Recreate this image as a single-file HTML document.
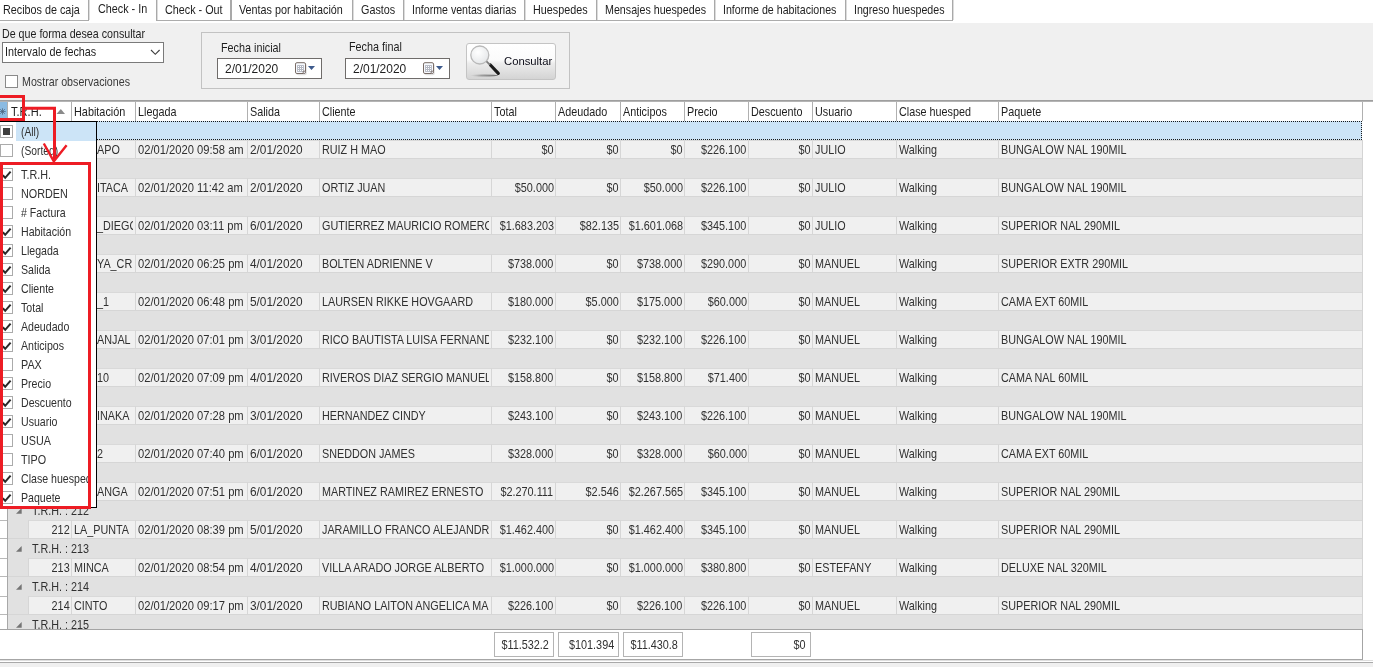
<!DOCTYPE html>
<html><head><meta charset="utf-8"><title>Check - In</title>
<style>
html,body{margin:0;padding:0}
body{width:1373px;height:667px;position:relative;overflow:hidden;background:#f0f0f0;font-family:"Liberation Sans",sans-serif;font-size:13px;color:#1e1e1e;line-height:15px}
.a{position:absolute}
.x{position:absolute;white-space:nowrap;display:inline-block;transform-origin:0 50%;transform:scaleX(.83);height:15px;line-height:15px}
.x.r{transform-origin:100% 50%}
.x.n{transform:scaleX(.86)}
.x.m{transform:scaleX(.835)}
.x.d{transform:scaleX(.91)}
.tab{position:absolute;top:0;height:20px;background:#fff;border-right:1px solid #a6a6a6;border-bottom:1px solid #a6a6a6;box-sizing:border-box}
.cb{position:absolute;width:13px;height:13px;box-sizing:border-box;border:1px solid #ababab;background:#fff}
.cell{position:absolute;background:#f0f0f0;box-sizing:border-box;border-left:1px solid #d6d6d6;border-top:1px solid #d9d9d9;border-bottom:1px solid #d6d6d6;height:19px}
.g{color:#303030}
</style></head><body><div id="root" style="position:absolute;left:0;top:0;width:1373px;height:667px;will-change:transform">

<div class="a" style="left:0;top:0;width:1373px;height:23px;background:#fff"></div>
<div class="a" style="left:0;top:20px;width:953px;height:1px;background:#acacac"></div>
<div class="a" style="left:89px;top:20px;width:67px;height:1px;background:#fff"></div>
<div class="a" style="left:88px;top:0;width:1px;height:21px;background:#a9a9a9"></div>
<div class="a" style="left:89px;top:0;width:1px;height:20px;background:#dcdcdc"></div>
<div class="a" style="left:156px;top:0;width:1px;height:21px;background:#a9a9a9"></div>
<div class="a" style="left:157px;top:0;width:1px;height:20px;background:#dcdcdc"></div>
<div class="a" style="left:230px;top:0;width:2px;height:21px;background:#a9a9a9"></div>
<div class="a" style="left:352px;top:0;width:1px;height:21px;background:#a9a9a9"></div>
<div class="a" style="left:353px;top:0;width:1px;height:20px;background:#dcdcdc"></div>
<div class="a" style="left:403px;top:0;width:1px;height:21px;background:#a9a9a9"></div>
<div class="a" style="left:404px;top:0;width:1px;height:20px;background:#dcdcdc"></div>
<div class="a" style="left:524px;top:0;width:1px;height:21px;background:#a9a9a9"></div>
<div class="a" style="left:525px;top:0;width:1px;height:20px;background:#dcdcdc"></div>
<div class="a" style="left:596px;top:0;width:1px;height:21px;background:#a9a9a9"></div>
<div class="a" style="left:597px;top:0;width:1px;height:20px;background:#dcdcdc"></div>
<div class="a" style="left:714px;top:0;width:1px;height:21px;background:#a9a9a9"></div>
<div class="a" style="left:715px;top:0;width:1px;height:20px;background:#dcdcdc"></div>
<div class="a" style="left:845px;top:0;width:1px;height:21px;background:#a9a9a9"></div>
<div class="a" style="left:846px;top:0;width:1px;height:20px;background:#dcdcdc"></div>
<div class="a" style="left:952px;top:0;width:1px;height:21px;background:#a9a9a9"></div>
<div class="a" style="left:953px;top:0;width:1px;height:20px;background:#dcdcdc"></div>
<span class="x t" style="left:3.3px;top:2px;">Recibos de caja</span>
<span class="x t" style="left:98px;top:1px;">Check - In</span>
<span class="x t" style="left:165px;top:2px;">Check - Out</span>
<span class="x t" style="left:239.1px;top:2px;">Ventas por habitación</span>
<span class="x t" style="left:360.6px;top:2px;">Gastos</span>
<span class="x t" style="left:411.6px;top:2px;;transform:scaleX(0.816)">Informe ventas diarias</span>
<span class="x t" style="left:532.5px;top:2px;">Huespedes</span>
<span class="x t" style="left:604.8px;top:2px;;transform:scaleX(0.822)">Mensajes huespedes</span>
<span class="x t" style="left:722.6px;top:2px;;transform:scaleX(0.817)">Informe de habitaciones</span>
<span class="x t" style="left:854px;top:2px;;transform:scaleX(0.818)">Ingreso huespedes</span>
<span class="x t" style="left:1.8px;top:26px;;transform:scaleX(0.821)">De que forma desea consultar</span>
<div class="a" style="left:2px;top:42px;width:162px;height:21px;box-sizing:border-box;border:1px solid #7a7a7a;background:#fff"></div>
<span class="x t" style="left:4.5px;top:44px;">Intervalo de fechas</span>
<svg class="a" style="left:150px;top:49px" width="11" height="8" viewBox="0 0 11 8"><path d="M1 1 L5.3 5.3 L9.6 1" fill="none" stroke="#404040" stroke-width="1.15"/></svg>
<div class="cb" style="left:5px;top:75px;border-color:#8a8a8a"></div>
<span class="x t" style="left:21.6px;top:74px;color:#3a3a3a;transform:scaleX(0.8215)">Mostrar observaciones</span>
<div class="a" style="left:201px;top:32px;width:369px;height:57px;box-sizing:border-box;border:1px solid #c2c2c2"></div>
<span class="x t" style="left:220.5px;top:40px;">Fecha inicial</span>
<span class="x t" style="left:348.7px;top:39px;">Fecha final</span>
<div class="a" style="left:217px;top:58px;width:105px;height:21px;box-sizing:border-box;border:1px solid #6f6c6a;background:#fff"></div>
<span class="x n" style="left:224.6px;top:61px;transform:scaleX(.92)">2/01/2020</span>
<svg class="a" style="left:294px;top:61px" width="24" height="15" viewBox="0 0 24 15"><rect x="2.2" y="2.6" width="10.6" height="11.6" rx="2" fill="#9a9a9a" opacity=".28"/><rect x="1.5" y="1.7" width="10" height="10.8" rx="1.4" fill="#f7f9fd" stroke="#776a64" stroke-width="1"/><rect x="3.1" y="4.1" width="6.8" height="6.8" fill="#b3b7c2"/><g fill="#fff"><rect x="4" y="5" width="1" height="1"/><rect x="6" y="5" width="1" height="1"/><rect x="8" y="5" width="1" height="1"/><rect x="4" y="7" width="1" height="1"/><rect x="6" y="7" width="1" height="1"/><rect x="8" y="7" width="1" height="1"/><rect x="4" y="9" width="1" height="1"/><rect x="6" y="9" width="1" height="1"/><rect x="8" y="9" width="1" height="1"/></g><path d="M9.2 12.9 L9.2 10.2 L12 10.2" fill="#e8ecf6" stroke="#776a64" stroke-width=".9"/><path d="M14 4.9h7l-3.5 4.1z" fill="#3d5a8c"/></svg>
<div class="a" style="left:345px;top:58px;width:105px;height:21px;box-sizing:border-box;border:1px solid #6f6c6a;background:#fff"></div>
<span class="x n" style="left:352.6px;top:61px;transform:scaleX(.92)">2/01/2020</span>
<svg class="a" style="left:422px;top:61px" width="24" height="15" viewBox="0 0 24 15"><rect x="2.2" y="2.6" width="10.6" height="11.6" rx="2" fill="#9a9a9a" opacity=".28"/><rect x="1.5" y="1.7" width="10" height="10.8" rx="1.4" fill="#f7f9fd" stroke="#776a64" stroke-width="1"/><rect x="3.1" y="4.1" width="6.8" height="6.8" fill="#b3b7c2"/><g fill="#fff"><rect x="4" y="5" width="1" height="1"/><rect x="6" y="5" width="1" height="1"/><rect x="8" y="5" width="1" height="1"/><rect x="4" y="7" width="1" height="1"/><rect x="6" y="7" width="1" height="1"/><rect x="8" y="7" width="1" height="1"/><rect x="4" y="9" width="1" height="1"/><rect x="6" y="9" width="1" height="1"/><rect x="8" y="9" width="1" height="1"/></g><path d="M9.2 12.9 L9.2 10.2 L12 10.2" fill="#e8ecf6" stroke="#776a64" stroke-width=".9"/><path d="M14 4.9h7l-3.5 4.1z" fill="#3d5a8c"/></svg>
<div class="a" style="left:466px;top:43px;width:90px;height:37px;box-sizing:border-box;border:1px solid #c4c4c4;border-radius:3px;background:linear-gradient(#ffffff 0%,#fbfbfb 45%,#ececec 55%,#d4d4d4 100%)"></div>
<svg class="a" style="left:467px;top:44px" width="40" height="35" viewBox="0 0 40 35"><defs><radialGradient id="lg" cx="40%" cy="35%" r="70%"><stop offset="0" stop-color="#ffffff"/><stop offset="1" stop-color="#e4e6e8"/></radialGradient><linearGradient id="sh" x1="0" x2="1"><stop offset="0" stop-color="#999" stop-opacity="0"/><stop offset=".4" stop-color="#777" stop-opacity=".8"/><stop offset="1" stop-color="#444"/></linearGradient></defs><ellipse cx="17" cy="31.5" rx="14" ry="0.9" fill="url(#sh)" opacity=".75"/><circle cx="12.8" cy="11" r="9" fill="url(#lg)" stroke="#b9b9b9" stroke-width="1.3"/><path d="M23.4 21 L31.3 29.3" stroke="#1a1a1a" stroke-width="3.2" stroke-linecap="round"/><path d="M19.5 17.3 L23 20.8" stroke="#7c7c7c" stroke-width="1.8"/></svg>
<span class="a" style="left:503.5px;top:53.5px;font-size:11.5px;line-height:14px;color:#0c0c18;white-space:nowrap;transform:scaleX(.98);transform-origin:0 50%">Consultar</span>
<div class="a" style="left:0;top:100px;width:1373px;height:562px;background:#fff"></div>
<div class="a" style="left:0;top:100px;width:1373px;height:1px;background:#9e9e9e"></div>
<div class="a" style="left:0;top:101px;width:1373px;height:1px;background:#b4b4b4"></div>
<div class="a" style="left:0;top:102px;width:7px;height:19px;background:#8bbbe2"></div>
<svg class="a" style="left:-1px;top:108px" width="7" height="7" viewBox="0 0 7 7"><path d="M3.5 0.3v6.4M0.3 3.5h6.4M1.2 1.2l4.6 4.6M5.8 1.2l-4.6 4.6" stroke="#4a627c" stroke-width=".75" fill="none"/></svg>
<div class="a" style="left:7px;top:102px;width:1px;height:19px;background:#b0b0b0"></div>
<div class="a" style="left:71px;top:102px;width:1px;height:19px;background:#b0b0b0"></div>
<div class="a" style="left:135px;top:102px;width:1px;height:19px;background:#b0b0b0"></div>
<div class="a" style="left:247px;top:102px;width:1px;height:19px;background:#b0b0b0"></div>
<div class="a" style="left:319px;top:102px;width:1px;height:19px;background:#b0b0b0"></div>
<div class="a" style="left:491px;top:102px;width:1px;height:19px;background:#b0b0b0"></div>
<div class="a" style="left:555px;top:102px;width:1px;height:19px;background:#b0b0b0"></div>
<div class="a" style="left:620px;top:102px;width:1px;height:19px;background:#b0b0b0"></div>
<div class="a" style="left:684px;top:102px;width:1px;height:19px;background:#b0b0b0"></div>
<div class="a" style="left:748px;top:102px;width:1px;height:19px;background:#b0b0b0"></div>
<div class="a" style="left:812px;top:102px;width:1px;height:19px;background:#b0b0b0"></div>
<div class="a" style="left:896px;top:102px;width:1px;height:19px;background:#b0b0b0"></div>
<div class="a" style="left:998px;top:102px;width:1px;height:19px;background:#b0b0b0"></div>
<div class="a" style="left:1362px;top:102px;width:1px;height:19px;background:#b0b0b0"></div>
<span class="x t" style="left:10.6px;top:104px;;transform:scaleX(0.85)">T.R.H.</span>
<span class="x t" style="left:73.6px;top:104px;;transform:scaleX(0.835)">Habitación</span>
<span class="x t" style="left:137.6px;top:104px;">Llegada</span>
<span class="x t" style="left:249.6px;top:104px;">Salida</span>
<span class="x t" style="left:321.6px;top:104px;">Cliente</span>
<span class="x t" style="left:493.6px;top:104px;">Total</span>
<span class="x t" style="left:557.6px;top:104px;">Adeudado</span>
<span class="x t" style="left:622.6px;top:104px;">Anticipos</span>
<span class="x t" style="left:686.6px;top:104px;">Precio</span>
<span class="x t" style="left:750.6px;top:104px;">Descuento</span>
<span class="x t" style="left:814.6px;top:104px;">Usuario</span>
<span class="x t" style="left:898.6px;top:104px;">Clase huesped</span>
<span class="x t" style="left:1000.6px;top:104px;">Paquete</span>
<svg class="a" style="left:56px;top:108px" width="10" height="7" viewBox="0 0 10 7"><path d="M0.5 6 L4.8 1 L9 6z" fill="#8a8a8a"/></svg>
<div class="a" style="left:8px;top:121px;width:1354px;height:19px;box-sizing:border-box;background:#cce4f7;border:1px dotted #1a1a1a"></div>
<div class="a" style="left:8px;top:140px;width:1355px;height:489px;background:#e1e1e1"></div>
<div class="a" style="left:1362px;top:140px;width:1px;height:489px;background:#d4d4d4"></div>
<div class="a" style="left:0;top:140px;width:1373px;height:489px;overflow:hidden">
<div class="a" style="left:0;top:0px;width:7px;height:1px;background:#b9b9b9"></div>
<div class="a" style="left:0;top:18px;width:7px;height:1px;background:#b9b9b9"></div>
<div class="a" style="left:8px;top:18px;width:1354px;height:1px;background:#d6d6d6"></div>
<div class="cell" style="left:28px;top:0px;width:43px"></div>
<div class="cell" style="left:71px;top:0px;width:64px"></div>
<div class="a" style="left:97px;top:0px;width:36px;height:19px;overflow:hidden"><span class="x g" style="left:0.3px;top:2px">APO</span></div>
<div class="cell" style="left:135px;top:0px;width:112px"></div>
<div class="a" style="left:136px;top:0px;width:109px;height:19px;overflow:hidden"><span class="x n g" style="left:2.2px;top:2px">02/01/2020 09:58 am</span></div>
<div class="cell" style="left:247px;top:0px;width:72px"></div>
<div class="a" style="left:248px;top:0px;width:69px;height:19px;overflow:hidden"><span class="x d g" style="left:1.7px;top:2px">2/01/2020</span></div>
<div class="cell" style="left:319px;top:0px;width:172px"></div>
<div class="a" style="left:320px;top:0px;width:169px;height:19px;overflow:hidden"><span class="x g" style="left:1.7px;top:2px">RUIZ H MAO</span></div>
<div class="cell" style="left:491px;top:0px;width:64px"></div>
<div class="a" style="left:492px;top:0px;width:63px;height:19px;overflow:hidden"><span class="x r m g" style="right:1.4px;top:2px">$0</span></div>
<div class="cell" style="left:555px;top:0px;width:65px"></div>
<div class="a" style="left:556px;top:0px;width:64px;height:19px;overflow:hidden"><span class="x r m g" style="right:1.4px;top:2px">$0</span></div>
<div class="cell" style="left:620px;top:0px;width:64px"></div>
<div class="a" style="left:621px;top:0px;width:63px;height:19px;overflow:hidden"><span class="x r m g" style="right:1.4px;top:2px">$0</span></div>
<div class="cell" style="left:684px;top:0px;width:64px"></div>
<div class="a" style="left:685px;top:0px;width:63px;height:19px;overflow:hidden"><span class="x r m g" style="right:1.4px;top:2px">$226.100</span></div>
<div class="cell" style="left:748px;top:0px;width:64px"></div>
<div class="a" style="left:749px;top:0px;width:63px;height:19px;overflow:hidden"><span class="x r m g" style="right:1.4px;top:2px">$0</span></div>
<div class="cell" style="left:812px;top:0px;width:84px"></div>
<div class="a" style="left:813px;top:0px;width:81px;height:19px;overflow:hidden"><span class="x g" style="left:1.7px;top:2px">JULIO</span></div>
<div class="cell" style="left:896px;top:0px;width:102px"></div>
<div class="a" style="left:897px;top:0px;width:99px;height:19px;overflow:hidden"><span class="x g" style="left:1.7px;top:2px">Walking</span></div>
<div class="cell" style="left:998px;top:0px;width:364px"></div>
<div class="a" style="left:999px;top:0px;width:361px;height:19px;overflow:hidden"><span class="x g" style="left:1.7px;top:2px">BUNGALOW NAL 190MIL</span></div>
<div class="a" style="left:0;top:38px;width:7px;height:1px;background:#b9b9b9"></div>
<div class="a" style="left:0;top:56px;width:7px;height:1px;background:#b9b9b9"></div>
<div class="a" style="left:8px;top:56px;width:1354px;height:1px;background:#d6d6d6"></div>
<div class="cell" style="left:28px;top:38px;width:43px"></div>
<div class="cell" style="left:71px;top:38px;width:64px"></div>
<div class="a" style="left:97px;top:38px;width:36px;height:19px;overflow:hidden"><span class="x g" style="left:0.3px;top:2px">ITACA</span></div>
<div class="cell" style="left:135px;top:38px;width:112px"></div>
<div class="a" style="left:136px;top:38px;width:109px;height:19px;overflow:hidden"><span class="x n g" style="left:2.2px;top:2px">02/01/2020 11:42 am</span></div>
<div class="cell" style="left:247px;top:38px;width:72px"></div>
<div class="a" style="left:248px;top:38px;width:69px;height:19px;overflow:hidden"><span class="x d g" style="left:1.7px;top:2px">2/01/2020</span></div>
<div class="cell" style="left:319px;top:38px;width:172px"></div>
<div class="a" style="left:320px;top:38px;width:169px;height:19px;overflow:hidden"><span class="x g" style="left:1.7px;top:2px">ORTIZ JUAN</span></div>
<div class="cell" style="left:491px;top:38px;width:64px"></div>
<div class="a" style="left:492px;top:38px;width:63px;height:19px;overflow:hidden"><span class="x r m g" style="right:1.4px;top:2px">$50.000</span></div>
<div class="cell" style="left:555px;top:38px;width:65px"></div>
<div class="a" style="left:556px;top:38px;width:64px;height:19px;overflow:hidden"><span class="x r m g" style="right:1.4px;top:2px">$0</span></div>
<div class="cell" style="left:620px;top:38px;width:64px"></div>
<div class="a" style="left:621px;top:38px;width:63px;height:19px;overflow:hidden"><span class="x r m g" style="right:1.4px;top:2px">$50.000</span></div>
<div class="cell" style="left:684px;top:38px;width:64px"></div>
<div class="a" style="left:685px;top:38px;width:63px;height:19px;overflow:hidden"><span class="x r m g" style="right:1.4px;top:2px">$226.100</span></div>
<div class="cell" style="left:748px;top:38px;width:64px"></div>
<div class="a" style="left:749px;top:38px;width:63px;height:19px;overflow:hidden"><span class="x r m g" style="right:1.4px;top:2px">$0</span></div>
<div class="cell" style="left:812px;top:38px;width:84px"></div>
<div class="a" style="left:813px;top:38px;width:81px;height:19px;overflow:hidden"><span class="x g" style="left:1.7px;top:2px">JULIO</span></div>
<div class="cell" style="left:896px;top:38px;width:102px"></div>
<div class="a" style="left:897px;top:38px;width:99px;height:19px;overflow:hidden"><span class="x g" style="left:1.7px;top:2px">Walking</span></div>
<div class="cell" style="left:998px;top:38px;width:364px"></div>
<div class="a" style="left:999px;top:38px;width:361px;height:19px;overflow:hidden"><span class="x g" style="left:1.7px;top:2px">BUNGALOW NAL 190MIL</span></div>
<div class="a" style="left:0;top:76px;width:7px;height:1px;background:#b9b9b9"></div>
<div class="a" style="left:0;top:94px;width:7px;height:1px;background:#b9b9b9"></div>
<div class="a" style="left:8px;top:94px;width:1354px;height:1px;background:#d6d6d6"></div>
<div class="cell" style="left:28px;top:76px;width:43px"></div>
<div class="cell" style="left:71px;top:76px;width:64px"></div>
<div class="a" style="left:97px;top:76px;width:36px;height:19px;overflow:hidden"><span class="x g" style="left:0.3px;top:2px">_DIEGO</span></div>
<div class="cell" style="left:135px;top:76px;width:112px"></div>
<div class="a" style="left:136px;top:76px;width:109px;height:19px;overflow:hidden"><span class="x n g" style="left:2.2px;top:2px">02/01/2020 03:11 pm</span></div>
<div class="cell" style="left:247px;top:76px;width:72px"></div>
<div class="a" style="left:248px;top:76px;width:69px;height:19px;overflow:hidden"><span class="x d g" style="left:1.7px;top:2px">6/01/2020</span></div>
<div class="cell" style="left:319px;top:76px;width:172px"></div>
<div class="a" style="left:320px;top:76px;width:169px;height:19px;overflow:hidden"><span class="x g" style="left:1.7px;top:2px">GUTIERREZ MAURICIO ROMERO</span></div>
<div class="cell" style="left:491px;top:76px;width:64px"></div>
<div class="a" style="left:492px;top:76px;width:63px;height:19px;overflow:hidden"><span class="x r m g" style="right:1.4px;top:2px">$1.683.203</span></div>
<div class="cell" style="left:555px;top:76px;width:65px"></div>
<div class="a" style="left:556px;top:76px;width:64px;height:19px;overflow:hidden"><span class="x r m g" style="right:1.4px;top:2px">$82.135</span></div>
<div class="cell" style="left:620px;top:76px;width:64px"></div>
<div class="a" style="left:621px;top:76px;width:63px;height:19px;overflow:hidden"><span class="x r m g" style="right:1.4px;top:2px">$1.601.068</span></div>
<div class="cell" style="left:684px;top:76px;width:64px"></div>
<div class="a" style="left:685px;top:76px;width:63px;height:19px;overflow:hidden"><span class="x r m g" style="right:1.4px;top:2px">$345.100</span></div>
<div class="cell" style="left:748px;top:76px;width:64px"></div>
<div class="a" style="left:749px;top:76px;width:63px;height:19px;overflow:hidden"><span class="x r m g" style="right:1.4px;top:2px">$0</span></div>
<div class="cell" style="left:812px;top:76px;width:84px"></div>
<div class="a" style="left:813px;top:76px;width:81px;height:19px;overflow:hidden"><span class="x g" style="left:1.7px;top:2px">JULIO</span></div>
<div class="cell" style="left:896px;top:76px;width:102px"></div>
<div class="a" style="left:897px;top:76px;width:99px;height:19px;overflow:hidden"><span class="x g" style="left:1.7px;top:2px">Walking</span></div>
<div class="cell" style="left:998px;top:76px;width:364px"></div>
<div class="a" style="left:999px;top:76px;width:361px;height:19px;overflow:hidden"><span class="x g" style="left:1.7px;top:2px">SUPERIOR NAL 290MIL</span></div>
<div class="a" style="left:0;top:114px;width:7px;height:1px;background:#b9b9b9"></div>
<div class="a" style="left:0;top:132px;width:7px;height:1px;background:#b9b9b9"></div>
<div class="a" style="left:8px;top:132px;width:1354px;height:1px;background:#d6d6d6"></div>
<div class="cell" style="left:28px;top:114px;width:43px"></div>
<div class="cell" style="left:71px;top:114px;width:64px"></div>
<div class="a" style="left:97px;top:114px;width:36px;height:19px;overflow:hidden"><span class="x g" style="left:0.3px;top:2px">YA_CRI</span></div>
<div class="cell" style="left:135px;top:114px;width:112px"></div>
<div class="a" style="left:136px;top:114px;width:109px;height:19px;overflow:hidden"><span class="x n g" style="left:2.2px;top:2px">02/01/2020 06:25 pm</span></div>
<div class="cell" style="left:247px;top:114px;width:72px"></div>
<div class="a" style="left:248px;top:114px;width:69px;height:19px;overflow:hidden"><span class="x d g" style="left:1.7px;top:2px">4/01/2020</span></div>
<div class="cell" style="left:319px;top:114px;width:172px"></div>
<div class="a" style="left:320px;top:114px;width:169px;height:19px;overflow:hidden"><span class="x g" style="left:1.7px;top:2px">BOLTEN ADRIENNE V</span></div>
<div class="cell" style="left:491px;top:114px;width:64px"></div>
<div class="a" style="left:492px;top:114px;width:63px;height:19px;overflow:hidden"><span class="x r m g" style="right:1.4px;top:2px">$738.000</span></div>
<div class="cell" style="left:555px;top:114px;width:65px"></div>
<div class="a" style="left:556px;top:114px;width:64px;height:19px;overflow:hidden"><span class="x r m g" style="right:1.4px;top:2px">$0</span></div>
<div class="cell" style="left:620px;top:114px;width:64px"></div>
<div class="a" style="left:621px;top:114px;width:63px;height:19px;overflow:hidden"><span class="x r m g" style="right:1.4px;top:2px">$738.000</span></div>
<div class="cell" style="left:684px;top:114px;width:64px"></div>
<div class="a" style="left:685px;top:114px;width:63px;height:19px;overflow:hidden"><span class="x r m g" style="right:1.4px;top:2px">$290.000</span></div>
<div class="cell" style="left:748px;top:114px;width:64px"></div>
<div class="a" style="left:749px;top:114px;width:63px;height:19px;overflow:hidden"><span class="x r m g" style="right:1.4px;top:2px">$0</span></div>
<div class="cell" style="left:812px;top:114px;width:84px"></div>
<div class="a" style="left:813px;top:114px;width:81px;height:19px;overflow:hidden"><span class="x g" style="left:1.7px;top:2px">MANUEL</span></div>
<div class="cell" style="left:896px;top:114px;width:102px"></div>
<div class="a" style="left:897px;top:114px;width:99px;height:19px;overflow:hidden"><span class="x g" style="left:1.7px;top:2px">Walking</span></div>
<div class="cell" style="left:998px;top:114px;width:364px"></div>
<div class="a" style="left:999px;top:114px;width:361px;height:19px;overflow:hidden"><span class="x g" style="left:1.7px;top:2px">SUPERIOR EXTR 290MIL</span></div>
<div class="a" style="left:0;top:152px;width:7px;height:1px;background:#b9b9b9"></div>
<div class="a" style="left:0;top:170px;width:7px;height:1px;background:#b9b9b9"></div>
<div class="a" style="left:8px;top:170px;width:1354px;height:1px;background:#d6d6d6"></div>
<div class="cell" style="left:28px;top:152px;width:43px"></div>
<div class="cell" style="left:71px;top:152px;width:64px"></div>
<div class="a" style="left:97px;top:152px;width:36px;height:19px;overflow:hidden"><span class="x g" style="left:0.3px;top:2px">_1</span></div>
<div class="cell" style="left:135px;top:152px;width:112px"></div>
<div class="a" style="left:136px;top:152px;width:109px;height:19px;overflow:hidden"><span class="x n g" style="left:2.2px;top:2px">02/01/2020 06:48 pm</span></div>
<div class="cell" style="left:247px;top:152px;width:72px"></div>
<div class="a" style="left:248px;top:152px;width:69px;height:19px;overflow:hidden"><span class="x d g" style="left:1.7px;top:2px">5/01/2020</span></div>
<div class="cell" style="left:319px;top:152px;width:172px"></div>
<div class="a" style="left:320px;top:152px;width:169px;height:19px;overflow:hidden"><span class="x g" style="left:1.7px;top:2px">LAURSEN RIKKE HOVGAARD</span></div>
<div class="cell" style="left:491px;top:152px;width:64px"></div>
<div class="a" style="left:492px;top:152px;width:63px;height:19px;overflow:hidden"><span class="x r m g" style="right:1.4px;top:2px">$180.000</span></div>
<div class="cell" style="left:555px;top:152px;width:65px"></div>
<div class="a" style="left:556px;top:152px;width:64px;height:19px;overflow:hidden"><span class="x r m g" style="right:1.4px;top:2px">$5.000</span></div>
<div class="cell" style="left:620px;top:152px;width:64px"></div>
<div class="a" style="left:621px;top:152px;width:63px;height:19px;overflow:hidden"><span class="x r m g" style="right:1.4px;top:2px">$175.000</span></div>
<div class="cell" style="left:684px;top:152px;width:64px"></div>
<div class="a" style="left:685px;top:152px;width:63px;height:19px;overflow:hidden"><span class="x r m g" style="right:1.4px;top:2px">$60.000</span></div>
<div class="cell" style="left:748px;top:152px;width:64px"></div>
<div class="a" style="left:749px;top:152px;width:63px;height:19px;overflow:hidden"><span class="x r m g" style="right:1.4px;top:2px">$0</span></div>
<div class="cell" style="left:812px;top:152px;width:84px"></div>
<div class="a" style="left:813px;top:152px;width:81px;height:19px;overflow:hidden"><span class="x g" style="left:1.7px;top:2px">MANUEL</span></div>
<div class="cell" style="left:896px;top:152px;width:102px"></div>
<div class="a" style="left:897px;top:152px;width:99px;height:19px;overflow:hidden"><span class="x g" style="left:1.7px;top:2px">Walking</span></div>
<div class="cell" style="left:998px;top:152px;width:364px"></div>
<div class="a" style="left:999px;top:152px;width:361px;height:19px;overflow:hidden"><span class="x g" style="left:1.7px;top:2px">CAMA EXT 60MIL</span></div>
<div class="a" style="left:0;top:190px;width:7px;height:1px;background:#b9b9b9"></div>
<div class="a" style="left:0;top:208px;width:7px;height:1px;background:#b9b9b9"></div>
<div class="a" style="left:8px;top:208px;width:1354px;height:1px;background:#d6d6d6"></div>
<div class="cell" style="left:28px;top:190px;width:43px"></div>
<div class="cell" style="left:71px;top:190px;width:64px"></div>
<div class="a" style="left:97px;top:190px;width:36px;height:19px;overflow:hidden"><span class="x g" style="left:0.3px;top:2px">ANJAL</span></div>
<div class="cell" style="left:135px;top:190px;width:112px"></div>
<div class="a" style="left:136px;top:190px;width:109px;height:19px;overflow:hidden"><span class="x n g" style="left:2.2px;top:2px">02/01/2020 07:01 pm</span></div>
<div class="cell" style="left:247px;top:190px;width:72px"></div>
<div class="a" style="left:248px;top:190px;width:69px;height:19px;overflow:hidden"><span class="x d g" style="left:1.7px;top:2px">3/01/2020</span></div>
<div class="cell" style="left:319px;top:190px;width:172px"></div>
<div class="a" style="left:320px;top:190px;width:169px;height:19px;overflow:hidden"><span class="x g" style="left:1.7px;top:2px">RICO BAUTISTA LUISA FERNANDA</span></div>
<div class="cell" style="left:491px;top:190px;width:64px"></div>
<div class="a" style="left:492px;top:190px;width:63px;height:19px;overflow:hidden"><span class="x r m g" style="right:1.4px;top:2px">$232.100</span></div>
<div class="cell" style="left:555px;top:190px;width:65px"></div>
<div class="a" style="left:556px;top:190px;width:64px;height:19px;overflow:hidden"><span class="x r m g" style="right:1.4px;top:2px">$0</span></div>
<div class="cell" style="left:620px;top:190px;width:64px"></div>
<div class="a" style="left:621px;top:190px;width:63px;height:19px;overflow:hidden"><span class="x r m g" style="right:1.4px;top:2px">$232.100</span></div>
<div class="cell" style="left:684px;top:190px;width:64px"></div>
<div class="a" style="left:685px;top:190px;width:63px;height:19px;overflow:hidden"><span class="x r m g" style="right:1.4px;top:2px">$226.100</span></div>
<div class="cell" style="left:748px;top:190px;width:64px"></div>
<div class="a" style="left:749px;top:190px;width:63px;height:19px;overflow:hidden"><span class="x r m g" style="right:1.4px;top:2px">$0</span></div>
<div class="cell" style="left:812px;top:190px;width:84px"></div>
<div class="a" style="left:813px;top:190px;width:81px;height:19px;overflow:hidden"><span class="x g" style="left:1.7px;top:2px">MANUEL</span></div>
<div class="cell" style="left:896px;top:190px;width:102px"></div>
<div class="a" style="left:897px;top:190px;width:99px;height:19px;overflow:hidden"><span class="x g" style="left:1.7px;top:2px">Walking</span></div>
<div class="cell" style="left:998px;top:190px;width:364px"></div>
<div class="a" style="left:999px;top:190px;width:361px;height:19px;overflow:hidden"><span class="x g" style="left:1.7px;top:2px">BUNGALOW NAL 190MIL</span></div>
<div class="a" style="left:0;top:228px;width:7px;height:1px;background:#b9b9b9"></div>
<div class="a" style="left:0;top:246px;width:7px;height:1px;background:#b9b9b9"></div>
<div class="a" style="left:8px;top:246px;width:1354px;height:1px;background:#d6d6d6"></div>
<div class="cell" style="left:28px;top:228px;width:43px"></div>
<div class="cell" style="left:71px;top:228px;width:64px"></div>
<div class="a" style="left:97px;top:228px;width:36px;height:19px;overflow:hidden"><span class="x g" style="left:0.3px;top:2px">10</span></div>
<div class="cell" style="left:135px;top:228px;width:112px"></div>
<div class="a" style="left:136px;top:228px;width:109px;height:19px;overflow:hidden"><span class="x n g" style="left:2.2px;top:2px">02/01/2020 07:09 pm</span></div>
<div class="cell" style="left:247px;top:228px;width:72px"></div>
<div class="a" style="left:248px;top:228px;width:69px;height:19px;overflow:hidden"><span class="x d g" style="left:1.7px;top:2px">4/01/2020</span></div>
<div class="cell" style="left:319px;top:228px;width:172px"></div>
<div class="a" style="left:320px;top:228px;width:169px;height:19px;overflow:hidden"><span class="x g" style="left:1.7px;top:2px">RIVEROS DIAZ SERGIO MANUEL</span></div>
<div class="cell" style="left:491px;top:228px;width:64px"></div>
<div class="a" style="left:492px;top:228px;width:63px;height:19px;overflow:hidden"><span class="x r m g" style="right:1.4px;top:2px">$158.800</span></div>
<div class="cell" style="left:555px;top:228px;width:65px"></div>
<div class="a" style="left:556px;top:228px;width:64px;height:19px;overflow:hidden"><span class="x r m g" style="right:1.4px;top:2px">$0</span></div>
<div class="cell" style="left:620px;top:228px;width:64px"></div>
<div class="a" style="left:621px;top:228px;width:63px;height:19px;overflow:hidden"><span class="x r m g" style="right:1.4px;top:2px">$158.800</span></div>
<div class="cell" style="left:684px;top:228px;width:64px"></div>
<div class="a" style="left:685px;top:228px;width:63px;height:19px;overflow:hidden"><span class="x r m g" style="right:1.4px;top:2px">$71.400</span></div>
<div class="cell" style="left:748px;top:228px;width:64px"></div>
<div class="a" style="left:749px;top:228px;width:63px;height:19px;overflow:hidden"><span class="x r m g" style="right:1.4px;top:2px">$0</span></div>
<div class="cell" style="left:812px;top:228px;width:84px"></div>
<div class="a" style="left:813px;top:228px;width:81px;height:19px;overflow:hidden"><span class="x g" style="left:1.7px;top:2px">MANUEL</span></div>
<div class="cell" style="left:896px;top:228px;width:102px"></div>
<div class="a" style="left:897px;top:228px;width:99px;height:19px;overflow:hidden"><span class="x g" style="left:1.7px;top:2px">Walking</span></div>
<div class="cell" style="left:998px;top:228px;width:364px"></div>
<div class="a" style="left:999px;top:228px;width:361px;height:19px;overflow:hidden"><span class="x g" style="left:1.7px;top:2px">CAMA NAL 60MIL</span></div>
<div class="a" style="left:0;top:266px;width:7px;height:1px;background:#b9b9b9"></div>
<div class="a" style="left:0;top:284px;width:7px;height:1px;background:#b9b9b9"></div>
<div class="a" style="left:8px;top:284px;width:1354px;height:1px;background:#d6d6d6"></div>
<div class="cell" style="left:28px;top:266px;width:43px"></div>
<div class="cell" style="left:71px;top:266px;width:64px"></div>
<div class="a" style="left:97px;top:266px;width:36px;height:19px;overflow:hidden"><span class="x g" style="left:0.3px;top:2px">INAKA</span></div>
<div class="cell" style="left:135px;top:266px;width:112px"></div>
<div class="a" style="left:136px;top:266px;width:109px;height:19px;overflow:hidden"><span class="x n g" style="left:2.2px;top:2px">02/01/2020 07:28 pm</span></div>
<div class="cell" style="left:247px;top:266px;width:72px"></div>
<div class="a" style="left:248px;top:266px;width:69px;height:19px;overflow:hidden"><span class="x d g" style="left:1.7px;top:2px">3/01/2020</span></div>
<div class="cell" style="left:319px;top:266px;width:172px"></div>
<div class="a" style="left:320px;top:266px;width:169px;height:19px;overflow:hidden"><span class="x g" style="left:1.7px;top:2px">HERNANDEZ CINDY</span></div>
<div class="cell" style="left:491px;top:266px;width:64px"></div>
<div class="a" style="left:492px;top:266px;width:63px;height:19px;overflow:hidden"><span class="x r m g" style="right:1.4px;top:2px">$243.100</span></div>
<div class="cell" style="left:555px;top:266px;width:65px"></div>
<div class="a" style="left:556px;top:266px;width:64px;height:19px;overflow:hidden"><span class="x r m g" style="right:1.4px;top:2px">$0</span></div>
<div class="cell" style="left:620px;top:266px;width:64px"></div>
<div class="a" style="left:621px;top:266px;width:63px;height:19px;overflow:hidden"><span class="x r m g" style="right:1.4px;top:2px">$243.100</span></div>
<div class="cell" style="left:684px;top:266px;width:64px"></div>
<div class="a" style="left:685px;top:266px;width:63px;height:19px;overflow:hidden"><span class="x r m g" style="right:1.4px;top:2px">$226.100</span></div>
<div class="cell" style="left:748px;top:266px;width:64px"></div>
<div class="a" style="left:749px;top:266px;width:63px;height:19px;overflow:hidden"><span class="x r m g" style="right:1.4px;top:2px">$0</span></div>
<div class="cell" style="left:812px;top:266px;width:84px"></div>
<div class="a" style="left:813px;top:266px;width:81px;height:19px;overflow:hidden"><span class="x g" style="left:1.7px;top:2px">MANUEL</span></div>
<div class="cell" style="left:896px;top:266px;width:102px"></div>
<div class="a" style="left:897px;top:266px;width:99px;height:19px;overflow:hidden"><span class="x g" style="left:1.7px;top:2px">Walking</span></div>
<div class="cell" style="left:998px;top:266px;width:364px"></div>
<div class="a" style="left:999px;top:266px;width:361px;height:19px;overflow:hidden"><span class="x g" style="left:1.7px;top:2px">BUNGALOW NAL 190MIL</span></div>
<div class="a" style="left:0;top:304px;width:7px;height:1px;background:#b9b9b9"></div>
<div class="a" style="left:0;top:322px;width:7px;height:1px;background:#b9b9b9"></div>
<div class="a" style="left:8px;top:322px;width:1354px;height:1px;background:#d6d6d6"></div>
<div class="cell" style="left:28px;top:304px;width:43px"></div>
<div class="cell" style="left:71px;top:304px;width:64px"></div>
<div class="a" style="left:97px;top:304px;width:36px;height:19px;overflow:hidden"><span class="x g" style="left:0.3px;top:2px">2</span></div>
<div class="cell" style="left:135px;top:304px;width:112px"></div>
<div class="a" style="left:136px;top:304px;width:109px;height:19px;overflow:hidden"><span class="x n g" style="left:2.2px;top:2px">02/01/2020 07:40 pm</span></div>
<div class="cell" style="left:247px;top:304px;width:72px"></div>
<div class="a" style="left:248px;top:304px;width:69px;height:19px;overflow:hidden"><span class="x d g" style="left:1.7px;top:2px">6/01/2020</span></div>
<div class="cell" style="left:319px;top:304px;width:172px"></div>
<div class="a" style="left:320px;top:304px;width:169px;height:19px;overflow:hidden"><span class="x g" style="left:1.7px;top:2px">SNEDDON JAMES</span></div>
<div class="cell" style="left:491px;top:304px;width:64px"></div>
<div class="a" style="left:492px;top:304px;width:63px;height:19px;overflow:hidden"><span class="x r m g" style="right:1.4px;top:2px">$328.000</span></div>
<div class="cell" style="left:555px;top:304px;width:65px"></div>
<div class="a" style="left:556px;top:304px;width:64px;height:19px;overflow:hidden"><span class="x r m g" style="right:1.4px;top:2px">$0</span></div>
<div class="cell" style="left:620px;top:304px;width:64px"></div>
<div class="a" style="left:621px;top:304px;width:63px;height:19px;overflow:hidden"><span class="x r m g" style="right:1.4px;top:2px">$328.000</span></div>
<div class="cell" style="left:684px;top:304px;width:64px"></div>
<div class="a" style="left:685px;top:304px;width:63px;height:19px;overflow:hidden"><span class="x r m g" style="right:1.4px;top:2px">$60.000</span></div>
<div class="cell" style="left:748px;top:304px;width:64px"></div>
<div class="a" style="left:749px;top:304px;width:63px;height:19px;overflow:hidden"><span class="x r m g" style="right:1.4px;top:2px">$0</span></div>
<div class="cell" style="left:812px;top:304px;width:84px"></div>
<div class="a" style="left:813px;top:304px;width:81px;height:19px;overflow:hidden"><span class="x g" style="left:1.7px;top:2px">MANUEL</span></div>
<div class="cell" style="left:896px;top:304px;width:102px"></div>
<div class="a" style="left:897px;top:304px;width:99px;height:19px;overflow:hidden"><span class="x g" style="left:1.7px;top:2px">Walking</span></div>
<div class="cell" style="left:998px;top:304px;width:364px"></div>
<div class="a" style="left:999px;top:304px;width:361px;height:19px;overflow:hidden"><span class="x g" style="left:1.7px;top:2px">CAMA EXT 60MIL</span></div>
<div class="a" style="left:0;top:342px;width:7px;height:1px;background:#b9b9b9"></div>
<div class="a" style="left:0;top:360px;width:7px;height:1px;background:#b9b9b9"></div>
<div class="a" style="left:8px;top:360px;width:1354px;height:1px;background:#d6d6d6"></div>
<div class="cell" style="left:28px;top:342px;width:43px"></div>
<div class="cell" style="left:71px;top:342px;width:64px"></div>
<div class="a" style="left:97px;top:342px;width:36px;height:19px;overflow:hidden"><span class="x g" style="left:0.3px;top:2px">ANGA</span></div>
<div class="cell" style="left:135px;top:342px;width:112px"></div>
<div class="a" style="left:136px;top:342px;width:109px;height:19px;overflow:hidden"><span class="x n g" style="left:2.2px;top:2px">02/01/2020 07:51 pm</span></div>
<div class="cell" style="left:247px;top:342px;width:72px"></div>
<div class="a" style="left:248px;top:342px;width:69px;height:19px;overflow:hidden"><span class="x d g" style="left:1.7px;top:2px">6/01/2020</span></div>
<div class="cell" style="left:319px;top:342px;width:172px"></div>
<div class="a" style="left:320px;top:342px;width:169px;height:19px;overflow:hidden"><span class="x g" style="left:1.7px;top:2px">MARTINEZ RAMIREZ ERNESTO</span></div>
<div class="cell" style="left:491px;top:342px;width:64px"></div>
<div class="a" style="left:492px;top:342px;width:63px;height:19px;overflow:hidden"><span class="x r m g" style="right:1.4px;top:2px">$2.270.111</span></div>
<div class="cell" style="left:555px;top:342px;width:65px"></div>
<div class="a" style="left:556px;top:342px;width:64px;height:19px;overflow:hidden"><span class="x r m g" style="right:1.4px;top:2px">$2.546</span></div>
<div class="cell" style="left:620px;top:342px;width:64px"></div>
<div class="a" style="left:621px;top:342px;width:63px;height:19px;overflow:hidden"><span class="x r m g" style="right:1.4px;top:2px">$2.267.565</span></div>
<div class="cell" style="left:684px;top:342px;width:64px"></div>
<div class="a" style="left:685px;top:342px;width:63px;height:19px;overflow:hidden"><span class="x r m g" style="right:1.4px;top:2px">$345.100</span></div>
<div class="cell" style="left:748px;top:342px;width:64px"></div>
<div class="a" style="left:749px;top:342px;width:63px;height:19px;overflow:hidden"><span class="x r m g" style="right:1.4px;top:2px">$0</span></div>
<div class="cell" style="left:812px;top:342px;width:84px"></div>
<div class="a" style="left:813px;top:342px;width:81px;height:19px;overflow:hidden"><span class="x g" style="left:1.7px;top:2px">MANUEL</span></div>
<div class="cell" style="left:896px;top:342px;width:102px"></div>
<div class="a" style="left:897px;top:342px;width:99px;height:19px;overflow:hidden"><span class="x g" style="left:1.7px;top:2px">Walking</span></div>
<div class="cell" style="left:998px;top:342px;width:364px"></div>
<div class="a" style="left:999px;top:342px;width:361px;height:19px;overflow:hidden"><span class="x g" style="left:1.7px;top:2px">SUPERIOR NAL 290MIL</span></div>
<div class="a" style="left:0;top:380px;width:7px;height:1px;background:#b9b9b9"></div>
<div class="a" style="left:0;top:398px;width:7px;height:1px;background:#b9b9b9"></div>
<div class="a" style="left:8px;top:398px;width:1354px;height:1px;background:#d6d6d6"></div>
<div class="cell" style="left:28px;top:380px;width:43px"></div>
<div class="a" style="left:29px;top:380px;width:42px;height:19px;overflow:hidden"><span class="x r m g" style="right:1.4px;top:2px">212</span></div>
<div class="cell" style="left:71px;top:380px;width:64px"></div>
<div class="a" style="left:72px;top:380px;width:61px;height:19px;overflow:hidden"><span class="x g" style="left:1.7px;top:2px">LA_PUNTA</span></div>
<div class="cell" style="left:135px;top:380px;width:112px"></div>
<div class="a" style="left:136px;top:380px;width:109px;height:19px;overflow:hidden"><span class="x n g" style="left:2.2px;top:2px">02/01/2020 08:39 pm</span></div>
<div class="cell" style="left:247px;top:380px;width:72px"></div>
<div class="a" style="left:248px;top:380px;width:69px;height:19px;overflow:hidden"><span class="x d g" style="left:1.7px;top:2px">5/01/2020</span></div>
<div class="cell" style="left:319px;top:380px;width:172px"></div>
<div class="a" style="left:320px;top:380px;width:169px;height:19px;overflow:hidden"><span class="x g" style="left:1.7px;top:2px">JARAMILLO FRANCO ALEJANDRA</span></div>
<div class="cell" style="left:491px;top:380px;width:64px"></div>
<div class="a" style="left:492px;top:380px;width:63px;height:19px;overflow:hidden"><span class="x r m g" style="right:1.4px;top:2px">$1.462.400</span></div>
<div class="cell" style="left:555px;top:380px;width:65px"></div>
<div class="a" style="left:556px;top:380px;width:64px;height:19px;overflow:hidden"><span class="x r m g" style="right:1.4px;top:2px">$0</span></div>
<div class="cell" style="left:620px;top:380px;width:64px"></div>
<div class="a" style="left:621px;top:380px;width:63px;height:19px;overflow:hidden"><span class="x r m g" style="right:1.4px;top:2px">$1.462.400</span></div>
<div class="cell" style="left:684px;top:380px;width:64px"></div>
<div class="a" style="left:685px;top:380px;width:63px;height:19px;overflow:hidden"><span class="x r m g" style="right:1.4px;top:2px">$345.100</span></div>
<div class="cell" style="left:748px;top:380px;width:64px"></div>
<div class="a" style="left:749px;top:380px;width:63px;height:19px;overflow:hidden"><span class="x r m g" style="right:1.4px;top:2px">$0</span></div>
<div class="cell" style="left:812px;top:380px;width:84px"></div>
<div class="a" style="left:813px;top:380px;width:81px;height:19px;overflow:hidden"><span class="x g" style="left:1.7px;top:2px">MANUEL</span></div>
<div class="cell" style="left:896px;top:380px;width:102px"></div>
<div class="a" style="left:897px;top:380px;width:99px;height:19px;overflow:hidden"><span class="x g" style="left:1.7px;top:2px">Walking</span></div>
<div class="cell" style="left:998px;top:380px;width:364px"></div>
<div class="a" style="left:999px;top:380px;width:361px;height:19px;overflow:hidden"><span class="x g" style="left:1.7px;top:2px">SUPERIOR NAL 290MIL</span></div>
<div class="a" style="left:0;top:418px;width:7px;height:1px;background:#b9b9b9"></div>
<div class="a" style="left:0;top:436px;width:7px;height:1px;background:#b9b9b9"></div>
<div class="a" style="left:8px;top:436px;width:1354px;height:1px;background:#d6d6d6"></div>
<div class="cell" style="left:28px;top:418px;width:43px"></div>
<div class="a" style="left:29px;top:418px;width:42px;height:19px;overflow:hidden"><span class="x r m g" style="right:1.4px;top:2px">213</span></div>
<div class="cell" style="left:71px;top:418px;width:64px"></div>
<div class="a" style="left:72px;top:418px;width:61px;height:19px;overflow:hidden"><span class="x g" style="left:1.7px;top:2px">MINCA</span></div>
<div class="cell" style="left:135px;top:418px;width:112px"></div>
<div class="a" style="left:136px;top:418px;width:109px;height:19px;overflow:hidden"><span class="x n g" style="left:2.2px;top:2px">02/01/2020 08:54 pm</span></div>
<div class="cell" style="left:247px;top:418px;width:72px"></div>
<div class="a" style="left:248px;top:418px;width:69px;height:19px;overflow:hidden"><span class="x d g" style="left:1.7px;top:2px">4/01/2020</span></div>
<div class="cell" style="left:319px;top:418px;width:172px"></div>
<div class="a" style="left:320px;top:418px;width:169px;height:19px;overflow:hidden"><span class="x g" style="left:1.7px;top:2px">VILLA ARADO JORGE ALBERTO</span></div>
<div class="cell" style="left:491px;top:418px;width:64px"></div>
<div class="a" style="left:492px;top:418px;width:63px;height:19px;overflow:hidden"><span class="x r m g" style="right:1.4px;top:2px">$1.000.000</span></div>
<div class="cell" style="left:555px;top:418px;width:65px"></div>
<div class="a" style="left:556px;top:418px;width:64px;height:19px;overflow:hidden"><span class="x r m g" style="right:1.4px;top:2px">$0</span></div>
<div class="cell" style="left:620px;top:418px;width:64px"></div>
<div class="a" style="left:621px;top:418px;width:63px;height:19px;overflow:hidden"><span class="x r m g" style="right:1.4px;top:2px">$1.000.000</span></div>
<div class="cell" style="left:684px;top:418px;width:64px"></div>
<div class="a" style="left:685px;top:418px;width:63px;height:19px;overflow:hidden"><span class="x r m g" style="right:1.4px;top:2px">$380.800</span></div>
<div class="cell" style="left:748px;top:418px;width:64px"></div>
<div class="a" style="left:749px;top:418px;width:63px;height:19px;overflow:hidden"><span class="x r m g" style="right:1.4px;top:2px">$0</span></div>
<div class="cell" style="left:812px;top:418px;width:84px"></div>
<div class="a" style="left:813px;top:418px;width:81px;height:19px;overflow:hidden"><span class="x g" style="left:1.7px;top:2px">ESTEFANY</span></div>
<div class="cell" style="left:896px;top:418px;width:102px"></div>
<div class="a" style="left:897px;top:418px;width:99px;height:19px;overflow:hidden"><span class="x g" style="left:1.7px;top:2px">Walking</span></div>
<div class="cell" style="left:998px;top:418px;width:364px"></div>
<div class="a" style="left:999px;top:418px;width:361px;height:19px;overflow:hidden"><span class="x g" style="left:1.7px;top:2px">DELUXE NAL 320MIL</span></div>
<div class="a" style="left:0;top:456px;width:7px;height:1px;background:#b9b9b9"></div>
<div class="a" style="left:0;top:474px;width:7px;height:1px;background:#b9b9b9"></div>
<div class="a" style="left:8px;top:474px;width:1354px;height:1px;background:#d6d6d6"></div>
<div class="cell" style="left:28px;top:456px;width:43px"></div>
<div class="a" style="left:29px;top:456px;width:42px;height:19px;overflow:hidden"><span class="x r m g" style="right:1.4px;top:2px">214</span></div>
<div class="cell" style="left:71px;top:456px;width:64px"></div>
<div class="a" style="left:72px;top:456px;width:61px;height:19px;overflow:hidden"><span class="x g" style="left:1.7px;top:2px">CINTO</span></div>
<div class="cell" style="left:135px;top:456px;width:112px"></div>
<div class="a" style="left:136px;top:456px;width:109px;height:19px;overflow:hidden"><span class="x n g" style="left:2.2px;top:2px">02/01/2020 09:17 pm</span></div>
<div class="cell" style="left:247px;top:456px;width:72px"></div>
<div class="a" style="left:248px;top:456px;width:69px;height:19px;overflow:hidden"><span class="x d g" style="left:1.7px;top:2px">3/01/2020</span></div>
<div class="cell" style="left:319px;top:456px;width:172px"></div>
<div class="a" style="left:320px;top:456px;width:169px;height:19px;overflow:hidden"><span class="x g" style="left:1.7px;top:2px">RUBIANO LAITON ANGELICA MA</span></div>
<div class="cell" style="left:491px;top:456px;width:64px"></div>
<div class="a" style="left:492px;top:456px;width:63px;height:19px;overflow:hidden"><span class="x r m g" style="right:1.4px;top:2px">$226.100</span></div>
<div class="cell" style="left:555px;top:456px;width:65px"></div>
<div class="a" style="left:556px;top:456px;width:64px;height:19px;overflow:hidden"><span class="x r m g" style="right:1.4px;top:2px">$0</span></div>
<div class="cell" style="left:620px;top:456px;width:64px"></div>
<div class="a" style="left:621px;top:456px;width:63px;height:19px;overflow:hidden"><span class="x r m g" style="right:1.4px;top:2px">$226.100</span></div>
<div class="cell" style="left:684px;top:456px;width:64px"></div>
<div class="a" style="left:685px;top:456px;width:63px;height:19px;overflow:hidden"><span class="x r m g" style="right:1.4px;top:2px">$226.100</span></div>
<div class="cell" style="left:748px;top:456px;width:64px"></div>
<div class="a" style="left:749px;top:456px;width:63px;height:19px;overflow:hidden"><span class="x r m g" style="right:1.4px;top:2px">$0</span></div>
<div class="cell" style="left:812px;top:456px;width:84px"></div>
<div class="a" style="left:813px;top:456px;width:81px;height:19px;overflow:hidden"><span class="x g" style="left:1.7px;top:2px">MANUEL</span></div>
<div class="cell" style="left:896px;top:456px;width:102px"></div>
<div class="a" style="left:897px;top:456px;width:99px;height:19px;overflow:hidden"><span class="x g" style="left:1.7px;top:2px">Walking</span></div>
<div class="cell" style="left:998px;top:456px;width:364px"></div>
<div class="a" style="left:999px;top:456px;width:361px;height:19px;overflow:hidden"><span class="x g" style="left:1.7px;top:2px">SUPERIOR NAL 290MIL</span></div>
<svg class="a" style="left:16px;top:368px" width="6" height="6" viewBox="0 0 6 6"><path d="M5.7 0V5.7H0z" fill="#747474"/></svg>
<span class="x g" style="left:31.5px;top:363px">T.R.H. : 212</span>
<svg class="a" style="left:16px;top:406px" width="6" height="6" viewBox="0 0 6 6"><path d="M5.7 0V5.7H0z" fill="#747474"/></svg>
<span class="x g" style="left:31.5px;top:401px">T.R.H. : 213</span>
<svg class="a" style="left:16px;top:444px" width="6" height="6" viewBox="0 0 6 6"><path d="M5.7 0V5.7H0z" fill="#747474"/></svg>
<span class="x g" style="left:31.5px;top:439px">T.R.H. : 214</span>
<svg class="a" style="left:16px;top:482px" width="6" height="6" viewBox="0 0 6 6"><path d="M5.7 0V5.7H0z" fill="#747474"/></svg>
<span class="x g" style="left:31.5px;top:477px">T.R.H. : 215</span>
</div>
<div class="a" style="left:7px;top:120px;width:1px;height:509px;background:#a8a8a8"></div>
<div class="a" style="left:0;top:629px;width:1362px;height:1px;background:#a4a4a4"></div>
<div class="a" style="left:1362px;top:629px;width:1px;height:30px;background:#a4a4a4"></div>
<div class="a" style="left:494px;top:632px;width:60px;height:25px;box-sizing:border-box;border:1px solid #b4b4b4;background:#fff;overflow:hidden"><span class="x r m g" style="right:4.2px;top:4px">$11.532.2</span></div>
<div class="a" style="left:558px;top:632px;width:61px;height:25px;box-sizing:border-box;border:1px solid #b4b4b4;background:#fff;overflow:hidden"><span class="x r m g" style="right:4.2px;top:4px">$101.394</span></div>
<div class="a" style="left:623px;top:632px;width:60px;height:25px;box-sizing:border-box;border:1px solid #b4b4b4;background:#fff;overflow:hidden"><span class="x r m g" style="right:4.2px;top:4px">$11.430.8</span></div>
<div class="a" style="left:751px;top:632px;width:60px;height:25px;box-sizing:border-box;border:1px solid #b4b4b4;background:#fff;overflow:hidden"><span class="x r m g" style="right:4.2px;top:4px">$0</span></div>
<div class="a" style="left:0;top:659px;width:1363px;height:1px;background:#a6a6a6"></div>
<div class="a" style="left:0;top:660px;width:1373px;height:1px;background:#dedede"></div>
<div class="a" style="left:0;top:662px;width:1373px;height:1px;background:#a9a9a9"></div>
<div class="a" style="left:0;top:663px;width:1373px;height:4px;background:#f0f0f0"></div>
<div class="a" style="left:0;top:121px;width:97px;height:387px;box-sizing:border-box;background:#fff;border-top:1px solid #000;border-right:1px solid #000;border-bottom:1px solid #000"></div>
<div class="a" style="left:16px;top:122px;width:80px;height:19px;background:#cce4f7"></div>
<div class="a" style="left:0;top:122px;width:89px;height:385px;overflow:hidden">
<div class="cb" style="left:0;top:3px"></div>
<div class="a" style="left:3px;top:6px;width:7px;height:7px;background:#3f3f3f"></div>
<span class="x g" style="left:21px;top:2px;transform:scaleX(.79)">(All)</span>
<div class="cb" style="left:0;top:22px"></div>
<span class="x g" style="left:21px;top:21px;transform:scaleX(.79)">(Sorted)</span>
<div class="cb" style="left:0;top:46px"></div>
<svg class="a" style="left:0;top:46px" width="13" height="13" viewBox="0 0 13 13"><path d="M2.8 7.3 L5.2 9.8 L10.6 3.6" fill="none" stroke="#2a2a2a" stroke-width="2"/></svg>
<span class="x g" style="left:21px;top:45px;transform:scaleX(.83)">T.R.H.</span>
<div class="cb" style="left:0;top:65px"></div>
<span class="x g" style="left:21px;top:64px;transform:scaleX(.83)">NORDEN</span>
<div class="cb" style="left:0;top:84px"></div>
<span class="x g" style="left:21px;top:83px;transform:scaleX(.815)"># Factura</span>
<div class="cb" style="left:0;top:103px"></div>
<svg class="a" style="left:0;top:103px" width="13" height="13" viewBox="0 0 13 13"><path d="M2.8 7.3 L5.2 9.8 L10.6 3.6" fill="none" stroke="#2a2a2a" stroke-width="2"/></svg>
<span class="x g" style="left:21px;top:102px;transform:scaleX(.815)">Habitación</span>
<div class="cb" style="left:0;top:122px"></div>
<svg class="a" style="left:0;top:122px" width="13" height="13" viewBox="0 0 13 13"><path d="M2.8 7.3 L5.2 9.8 L10.6 3.6" fill="none" stroke="#2a2a2a" stroke-width="2"/></svg>
<span class="x g" style="left:21px;top:121px;transform:scaleX(.815)">Llegada</span>
<div class="cb" style="left:0;top:141px"></div>
<svg class="a" style="left:0;top:141px" width="13" height="13" viewBox="0 0 13 13"><path d="M2.8 7.3 L5.2 9.8 L10.6 3.6" fill="none" stroke="#2a2a2a" stroke-width="2"/></svg>
<span class="x g" style="left:21px;top:140px;transform:scaleX(.815)">Salida</span>
<div class="cb" style="left:0;top:160px"></div>
<svg class="a" style="left:0;top:160px" width="13" height="13" viewBox="0 0 13 13"><path d="M2.8 7.3 L5.2 9.8 L10.6 3.6" fill="none" stroke="#2a2a2a" stroke-width="2"/></svg>
<span class="x g" style="left:21px;top:159px;transform:scaleX(.815)">Cliente</span>
<div class="cb" style="left:0;top:179px"></div>
<svg class="a" style="left:0;top:179px" width="13" height="13" viewBox="0 0 13 13"><path d="M2.8 7.3 L5.2 9.8 L10.6 3.6" fill="none" stroke="#2a2a2a" stroke-width="2"/></svg>
<span class="x g" style="left:21px;top:178px;transform:scaleX(.815)">Total</span>
<div class="cb" style="left:0;top:198px"></div>
<svg class="a" style="left:0;top:198px" width="13" height="13" viewBox="0 0 13 13"><path d="M2.8 7.3 L5.2 9.8 L10.6 3.6" fill="none" stroke="#2a2a2a" stroke-width="2"/></svg>
<span class="x g" style="left:21px;top:197px;transform:scaleX(.815)">Adeudado</span>
<div class="cb" style="left:0;top:217px"></div>
<svg class="a" style="left:0;top:217px" width="13" height="13" viewBox="0 0 13 13"><path d="M2.8 7.3 L5.2 9.8 L10.6 3.6" fill="none" stroke="#2a2a2a" stroke-width="2"/></svg>
<span class="x g" style="left:21px;top:216px;transform:scaleX(.815)">Anticipos</span>
<div class="cb" style="left:0;top:236px"></div>
<span class="x g" style="left:21px;top:235px;transform:scaleX(.83)">PAX</span>
<div class="cb" style="left:0;top:255px"></div>
<svg class="a" style="left:0;top:255px" width="13" height="13" viewBox="0 0 13 13"><path d="M2.8 7.3 L5.2 9.8 L10.6 3.6" fill="none" stroke="#2a2a2a" stroke-width="2"/></svg>
<span class="x g" style="left:21px;top:254px;transform:scaleX(.815)">Precio</span>
<div class="cb" style="left:0;top:274px"></div>
<svg class="a" style="left:0;top:274px" width="13" height="13" viewBox="0 0 13 13"><path d="M2.8 7.3 L5.2 9.8 L10.6 3.6" fill="none" stroke="#2a2a2a" stroke-width="2"/></svg>
<span class="x g" style="left:21px;top:273px;transform:scaleX(.815)">Descuento</span>
<div class="cb" style="left:0;top:293px"></div>
<svg class="a" style="left:0;top:293px" width="13" height="13" viewBox="0 0 13 13"><path d="M2.8 7.3 L5.2 9.8 L10.6 3.6" fill="none" stroke="#2a2a2a" stroke-width="2"/></svg>
<span class="x g" style="left:21px;top:292px;transform:scaleX(.815)">Usuario</span>
<div class="cb" style="left:0;top:312px"></div>
<span class="x g" style="left:21px;top:311px;transform:scaleX(.83)">USUA</span>
<div class="cb" style="left:0;top:331px"></div>
<span class="x g" style="left:21px;top:330px;transform:scaleX(.83)">TIPO</span>
<div class="cb" style="left:0;top:350px"></div>
<svg class="a" style="left:0;top:350px" width="13" height="13" viewBox="0 0 13 13"><path d="M2.8 7.3 L5.2 9.8 L10.6 3.6" fill="none" stroke="#2a2a2a" stroke-width="2"/></svg>
<span class="x g" style="left:21px;top:349px;transform:scaleX(.815)">Clase huesped</span>
<div class="cb" style="left:0;top:369px"></div>
<svg class="a" style="left:0;top:369px" width="13" height="13" viewBox="0 0 13 13"><path d="M2.8 7.3 L5.2 9.8 L10.6 3.6" fill="none" stroke="#2a2a2a" stroke-width="2"/></svg>
<span class="x g" style="left:21px;top:368px;transform:scaleX(.815)">Paquete</span>
</div>
<svg class="a" style="left:0;top:0" width="1373" height="667" viewBox="0 0 1373 667"><g fill="none" stroke="#ed1c24"><rect x="-5" y="96.5" width="28.5" height="23" stroke-width="3"/><path d="M24 108.2 H54.5 V160" stroke-width="3"/><path d="M43.8 143.5 L53.8 161.3 L66.6 145.2" stroke-width="2.4"/><rect x="1.5" y="163.5" width="88" height="344" stroke-width="3"/></g></svg>
</div></body></html>
